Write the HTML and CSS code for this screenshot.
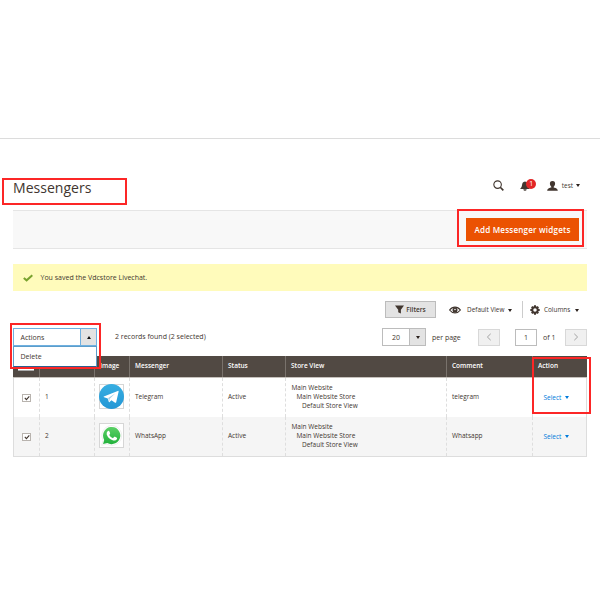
FILE: index.html
```html
<!DOCTYPE html>
<html lang="en">
<head>
<meta charset="utf-8">
<title>Messengers</title>
<link rel="stylesheet" href="styles.css">
</head>
<body>
<div class="topline"></div>
<main class="page">
  <header class="header">
    <h1 class="title">Messengers</h1>
    <div class="tools">
      <svg class="search" viewBox="0 0 12 12"><circle cx="5" cy="5" r="4.100" fill="none" stroke="#41362f" stroke-width="1.200"/><path d="M7.900 7.900 11.300 11.300" stroke="#41362f" stroke-width="1.800"/></svg>
      <div class="bell">
        <svg viewBox="0 0 10 10"><path d="M5 .4C2.700.7 2.200 2.400 2 4.300 1.800 6 1.200 6.600.1 7.900H9.900C8.800 6.600 8.200 6 8 4.300 7.800 2.400 7.300.7 5 .4ZM3.300 8.300h3.400Q6.500 9.800 5 9.800 3.500 9.800 3.300 8.300Z" fill="#41362f"/></svg>
        <span class="count">1</span>
      </div>
      <svg class="user" viewBox="0 0 11 10"><path d="M5.500 0C3.500 0 2.800 1.300 2.900 2.800 3 4.300 3.700 5.200 4.300 5.700V6.600C3 7.200.4 7.100.2 9.800H10.800C10.600 7.100 8 7.200 6.700 6.600V5.700C7.300 5.200 8 4.300 8.100 2.800 8.200 1.300 7.500 0 5.500 0Z" fill="#41362f"/></svg>
      <span class="username">test</span>
      <i class="caret"></i>
    </div>
  </header>
  <section class="actionbar"><button class="primary">Add Messenger widgets</button></section>
  <section class="message">
    <svg viewBox="0 0 10 8"><path d="M.8 3.900 3.600 6.300 9.300 1.200" fill="none" stroke="#79a22e" stroke-width="2"/></svg>
    <span>You saved the Vdcstore Livechat.</span>
  </section>
  <section class="viewbar">
    <button class="filters"><svg viewBox="0 0 9 9"><path d="M0 .600H9L5.900 4.800V8.500L3.200 7.200V4.800Z" fill="#41362f"/></svg><span>Filters</span></button>
    <div class="view">
      <svg viewBox="0 0 12 8"><path d="M.6 4C3.500.1 8.500.1 11.400 4 8.500 7.900 3.500 7.900.6 4Z" fill="#fff" stroke="#41362f" stroke-width="1.200"/><circle cx="6" cy="3.900" r="2.500" fill="#41362f"/><circle cx="6" cy="3.500" r=".8" fill="#eee"/></svg>
      <span>Default View</span><i class="caret"></i>
    </div>
    <div class="columns">
      <svg viewBox="0 0 10 10"><circle cx="5" cy="5" r="2.700" fill="none" stroke="#41362f" stroke-width="1.900"/><path d="M5 .3V2M5 8V9.700M.3 5H2M8 5H9.700M1.700 1.700 2.900 2.900M7.100 7.100 8.300 8.300M8.300 1.700 7.100 2.900M1.700 8.300 2.900 7.100" stroke="#41362f" stroke-width="2"/></svg>
      <span>Columns</span><i class="caret"></i>
    </div>
  </section>
  <section class="gridbar">
    <div class="actions">
      <div class="select"><span>Actions</span><b><i class="caret up"></i></b></div>
      <div class="menu">Delete</div>
    </div>
    <span class="records">2 records found (2 selected)</span>
    <div class="pager">
      <div class="size"><span>20</span><b><i class="caret"></i></b></div>
      <span class="per">per page</span>
      <button class="nav"><svg viewBox="0 0 6 8"><path d="M4.700.8 1.400 4 4.700 7.200" fill="none" stroke="#999" stroke-width=".9"/></svg></button>
      <span class="current">1</span>
      <span class="of">of 1</span>
      <button class="nav"><svg viewBox="0 0 6 8"><path d="M1.300.8 4.600 4 1.300 7.200" fill="none" stroke="#999" stroke-width=".9"/></svg></button>
    </div>
  </section>
  <div class="table">
    <div class="row head">
      <div class="cell check"><span class="headcheck">▣ ▾</span></div><div class="cell">ID</div><div class="cell image">Image</div><div class="cell">Messenger</div><div class="cell">Status</div><div class="cell">Store View</div><div class="cell">Comment</div><div class="cell">Action</div>
    </div>
    <div class="row">
      <div class="cell check"><span class="box"><svg viewBox="0 0 6 6"><path d="M.8 2.900 2.400 4.600 5.300 1.300" fill="none" stroke="#41362f" stroke-width="1.100"/></svg></span></div>
      <div class="cell">1</div>
      <div class="cell image"><div class="thumb"><svg viewBox="0 0 24 24"><defs><linearGradient id="tg" x2="0" y2="1"><stop stop-color="#37aee2"/><stop offset="1" stop-color="#2497d5"/></linearGradient></defs><circle cx="12" cy="12" r="12" fill="url(#tg)"/><path d="M4.600 12.100 18 6.600Q19 6.300 18.800 7.400L16.500 17.400Q16.200 18.500 15.100 17.800L11.900 15.500 10.200 17.200Q9.500 17.800 9.300 16.700L8.400 13.800 4.900 12.800Q4.100 12.500 4.600 12.100Z" fill="#fff"/><path d="M8.800 13.500 15.800 8.900 10.300 14.200 9.800 16.700Z" fill="#a5cfe8"/></svg></div></div>
      <div class="cell">Telegram</div><div class="cell">Active</div>
      <div class="cell stores"><p>Main Website</p><p>Main Website Store</p><p>Default Store View</p></div>
      <div class="cell">telegram</div><div class="cell link"><a>Select</a><i class="caret"></i></div>
    </div>
    <div class="row alt">
      <div class="cell check"><span class="box"><svg viewBox="0 0 6 6"><path d="M.8 2.900 2.400 4.600 5.300 1.300" fill="none" stroke="#41362f" stroke-width="1.100"/></svg></span></div>
      <div class="cell">2</div>
      <div class="cell image"><div class="thumb"><svg viewBox="0 0 24 24"><defs><linearGradient id="wa" x2="0" y2="1"><stop stop-color="#5bd066"/><stop offset="1" stop-color="#22b13c"/></linearGradient></defs><path d="M2.600 21.400 3.900 16.500A9.500 9.500 0 1 1 7.500 20.200Z" fill="#fff" stroke="#e3e3e3" stroke-width=".6"/><path d="M3.900 20.200 5 16.200A8.300 8.300 0 1 1 8 19.200Z" fill="url(#wa)"/><path d="M8.500 7.700Q9.300 6.900 9.900 8L10.700 9.900Q10.800 10.400 9.800 11.400 11 13.700 13.400 14.600L14.600 13.300Q14.900 13 15.400 13.300L17.100 14.100Q17.700 14.500 17.100 15.600 16 17.400 13.700 16.700 8.900 15.300 7.400 11.100 7 9 8.500 7.700Z" fill="#fff"/></svg></div></div>
      <div class="cell">WhatsApp</div><div class="cell">Active</div>
      <div class="cell stores"><p>Main Website</p><p>Main Website Store</p><p>Default Store View</p></div>
      <div class="cell">Whatsapp</div><div class="cell link"><a>Select</a><i class="caret"></i></div>
    </div>
  </div>
</main>
<div class="mark mark-title"></div>
<div class="mark mark-button"></div>
<div class="mark mark-actions"></div>
<div class="mark mark-select"></div>
</body>
</html>
```
FILE: styles.css
```css
* { box-sizing: border-box; }
body { margin: 0; width: 600px; height: 600px; overflow: hidden; position: relative; background: #fff; color: #41362f; font: 6.7px/9px "Open Sans", sans-serif; }
button { font: inherit; color: inherit; padding: 0; border: 0; border-radius: 0; }
svg { display: block; flex: none; }
p { margin: 0; }
.topline { height: 139px; border-bottom: 1px solid #dcdcdc; }
.page { padding: 0 13px; }
.caret { display: block; flex: none; width: 0; height: 0; border: 2px solid transparent; border-top: 3px solid #2a211c; border-bottom: 0; }
.caret.up { border-top: 0; border-bottom: 3px solid #111; }

.header { height: 71px; display: flex; justify-content: space-between; align-items: flex-start; padding-top: 38px; }
.title { margin: 0; font-size: 14.05px; line-height: 21px; font-weight: 400; }
.tools { display: flex; align-items: center; height: 17px; padding-right: 7px; }
.search { width: 11px; height: 11px; }
.bell { position: relative; margin-left: 16px; width: 18px; height: 11px; }
.bell svg { width: 10px; height: 10px; margin-top: 1px; }
.count { position: absolute; left: 6px; top: -1px; width: 10px; height: 10px; border-radius: 50%; background: #e22626; color: #fff; font-size: 7px; line-height: 10px; text-align: center; }
.user { width: 11px; height: 10px; margin-left: 9px; }
.username { margin: 0 3px 0 3.5px; font-size: 6.4px; }

.actionbar { height: 39px; background: #f8f8f8; border: solid #e5e5e5; border-width: 1px 0; display: flex; justify-content: flex-end; align-items: center; padding-right: 8px; }
.primary { width: 113px; height: 23px; background: #eb5202; color: #fff; font-size: 8.1px; font-weight: 600; letter-spacing: .18px; white-space: nowrap; }

.message { margin-top: 15px; height: 27px; background: #fffbbb; display: flex; align-items: center; padding-left: 10px; font-size: 7px; gap: 7.5px; }
.message svg { width: 10px; height: 8px; }

.viewbar { margin-top: 10px; height: 17px; display: flex; align-items: center; padding-left: 372px; font-size: 6.4px; white-space: nowrap; }
.filters { width: 51px; height: 17px; background: #e3e3e3; border: 1px solid #bcbcbc; display: flex; align-items: center; justify-content: center; gap: 2px; font-weight: 600; font-size: 6.5px; }
.filters svg { width: 9px; height: 9px; }
.view { display: flex; align-items: center; margin-left: 13px; width: 73px; }
.view svg { width: 12px; height: 8px; margin-right: 6px; }
.view .caret { margin: 1px 0 0 4px; }
.columns { display: flex; align-items: center; height: 17px; border-left: 1px solid #ccc; padding-left: 7px; }
.columns svg { width: 10px; height: 10px; margin-right: 4px; }
.columns .caret { margin: 1px 0 0 5px; }

.gridbar { margin-top: 10px; height: 28px; display: flex; align-items: flex-start; font-size: 7px; white-space: nowrap; }
.actions { position: relative; width: 84px; height: 18px; }
.select, .size { display: flex; align-items: center; height: 18px; border: 1px solid #6fb0e0; background: #fff; }
.select span { flex: 1; padding-left: 6.5px; }
.select b, .size b { width: 16px; height: 16px; background: #e3e3e3; border-left: 1px solid #6fb0e0; display: flex; align-items: center; justify-content: center; }
.menu { position: absolute; left: 0; top: 18px; width: 84px; height: 21px; background: #fff; border: 1px solid #5c9dca; border-bottom: 1px solid #2d5f8f; line-height: 19px; padding-left: 6.5px; z-index: 2; }
.records { margin-left: 18px; line-height: 18px; }
.pager { margin-left: auto; display: flex; align-items: center; height: 18px; }
.size { width: 44px; border-color: #bcbcbc; }
.size span { flex: 1; text-align: center; }
.size b { border-color: #bcbcbc; }
.per { width: 52px; padding-left: 6px; }
.nav { width: 22px; height: 17px; background: #f0f0f0; border: 1px solid #d8d8d8; display: flex; align-items: center; justify-content: center; }
.nav svg { width: 6px; height: 8px; }
.current { margin-left: 15px; width: 22px; height: 17px; line-height: 16px; border: 1px solid #bcbcbc; text-align: center; }
.of { width: 28px; padding-left: 6px; }

.table { width: 574px; border: 1px solid #ddd; border-top: 0; font-size: 6.5px; }
.row { height: 39px; display: grid; grid-template-columns: 25px 55px 35px 93px 63px 161px 86px 1fr; }
.cell { display: flex; align-items: center; padding: 0 0 2px 5px; border-left: 1px dashed #dedede; white-space: nowrap; }
.cell:first-child { border-left: 0; }
.head { height: 22px; background: #514943; color: #fff; font-weight: 600; margin: 0 -1px; border-bottom: 1px solid #c6c1bc; grid-template-columns: 26px 55px 35px 93px 63px 161px 86px 1fr; }
.head .cell { border-left: 1px solid #79726c; }
.head .cell:first-child { border-left: 0; }
.alt { background: #f5f5f5; }
.row .check { padding: 0; justify-content: center; }
.head .check { align-items: flex-end; padding-bottom: 6px; }
.headcheck { width: 16px; height: 10px; background: #fff; color: #514943; border-bottom: 1px solid #aaa; font-size: 6px; text-align: center; }
.box { width: 9px; height: 8px; border: 1px solid #b8b3ae; background: #fff; display: flex; align-items: center; justify-content: center; }
.box svg { width: 6px; height: 6px; }
.cell.image { padding-left: 4px; }
.head .image { padding-left: 5px; }
.thumb { width: 25px; height: 25px; border: 1px solid #d6d6d6; background: #fff; display: flex; align-items: center; justify-content: center; }
.thumb svg { width: 25px; height: 25px; }
.stores { flex-direction: column; align-items: flex-start; justify-content: center; }
.row .stores { padding-left: 5.5px; }
.stores p:nth-child(2) { padding-left: 5px; }
.stores p:nth-child(3) { padding-left: 10.5px; }
.link { padding: 0 0 0 10.5px; color: #007bdb; }
.link .caret { margin-left: 3.5px; border-top-color: #007bdb; }

.mark { position: absolute; border: 2px solid #fc2626; z-index: 3; }
.mark-title { left: 2px; top: 178px; width: 125px; height: 27px; }
.mark-button { left: 457px; top: 209px; width: 127px; height: 38px; }
.mark-actions { left: 10px; top: 323px; width: 91px; height: 46px; }
.mark-select { left: 532px; top: 357px; width: 59px; height: 57px; }
```
